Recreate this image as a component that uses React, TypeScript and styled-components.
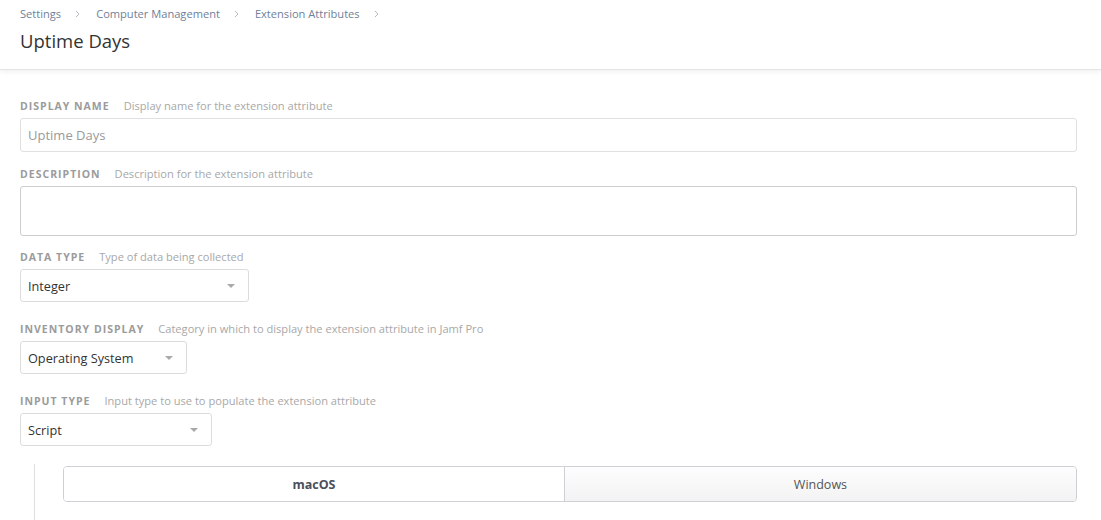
import React from 'react';
import styled, { createGlobalStyle } from 'styled-components';

const GlobalStyle = createGlobalStyle`
    * { box-sizing: border-box; }
    body {
        margin: 0;
        background: #fff;
        font-family: "Open Sans", "Liberation Sans", sans-serif;
        color: #333;
    }
`

const Header = styled.header`
    height: 70px;
    padding: 6px 20px 0;
    background: #fff;
    border-bottom: 1px solid #e4e4e4;
    box-shadow: 0 2px 5px rgba(0, 0, 0, 0.06);
`

const Breadcrumbs = styled.nav`
    display: flex;
    align-items: center;
    font-size: 11.1px;
    line-height: 16px;
    color: #6f7f9a;
`

const Chevron = styled.svg`
    width: 5px;
    height: 8px;
    margin: 0 16px 0 14px;
`

const Title = styled.h1`
    margin: 7px 0 0;
    font-size: 18.5px;
    font-weight: 400;
    color: #333;
    line-height: 24px;
`

const Content = styled.main`
    padding: 29px 24px 0 20px;
`

const Field = styled.div<{ $gap?: number }>`
    margin-bottom: ${p => p.$gap ?? 15}px;
`

const LabelRow = styled.div`
    display: flex;
    align-items: baseline;
    height: 13px;
    line-height: 13px;
    margin-bottom: 6px;
    label {
        font-size: 10.5px;
        font-weight: 700;
        letter-spacing: 1px;
        color: #9b9b9b;
        margin-right: 14px;
    }
    span {
        font-size: 11.1px;
        color: #a8a8a8;
    }
`

const TextInput = styled.div`
    height: 34px;
    border: 1px solid #e0e0e0;
    border-radius: 3px;
    padding: 0 7px;
    display: flex;
    align-items: center;
    font-size: 13px;
    color: #9a9a9a;
`

const TextArea = styled.div`
    height: 50px;
    border: 1px solid #cdcdcd;
    border-radius: 3px;
`

const Select = styled.div<{ $width: number }>`
    width: ${p => p.$width}px;
    height: 33px;
    border: 1px solid #dcdcdc;
    border-radius: 3px;
    padding: 0 13px 0 7px;
    display: flex;
    align-items: center;
    justify-content: space-between;
    font-size: 12.7px;
    color: #333;
    &::after {
        content: '';
        border-left: 4px solid transparent;
        border-right: 4px solid transparent;
        border-top: 4px solid #a9a9a9;
    }
`

const ScriptSection = styled.section`
    margin-left: 14px;
    padding: 2px 0 20px 28px;
    border-left: 1px solid #dedede;
`

const Tabs = styled.div`
    display: grid;
    grid-template-columns: 49.4% 1fr;
    height: 36px;
    border: 1px solid #cfcfd4;
    border-radius: 4px;
    overflow: hidden;
`

const Tab = styled.div<{ $active?: boolean }>`
    display: flex;
    align-items: center;
    justify-content: center;
    font-size: 12.5px;
    font-weight: ${p => p.$active ? 700 : 400};
    color: ${p => p.$active ? '#4a4f5c' : '#555'};
    background: ${p => p.$active ? '#fff' : 'linear-gradient(#fdfdfd, #f3f3f3)'};
    & + & {
        border-left: 1px solid #cfcfd4;
    }
`

const Sep = () => (
    <Chevron viewBox="0 0 5 8">
        <path d="M1 1l3 3-3 3" fill="none" stroke="#b3bac6" strokeWidth="1" />
    </Chevron>
)

function App() {
    return (
        <>
            <GlobalStyle />
            <Header>
                <Breadcrumbs>
                    Settings<Sep />
                    Computer Management<Sep />
                    Extension Attributes<Sep />
                </Breadcrumbs>
                <Title>Uptime Days</Title>
            </Header>

            <Content>
                <Field>
                    <LabelRow>
                        <label>DISPLAY NAME</label>
                        <span>Display name for the extension attribute</span>
                    </LabelRow>
                    <TextInput>Uptime Days</TextInput>
                </Field>

                <Field $gap={14}>
                    <LabelRow>
                        <label>DESCRIPTION</label>
                        <span>Description for the extension attribute</span>
                    </LabelRow>
                    <TextArea />
                </Field>

                <Field $gap={20}>
                    <LabelRow>
                        <label>DATA TYPE</label>
                        <span>Type of data being collected</span>
                    </LabelRow>
                    <Select $width={229}>Integer</Select>
                </Field>

                <Field $gap={20}>
                    <LabelRow>
                        <label>INVENTORY DISPLAY</label>
                        <span>Category in which to display the extension attribute in Jamf Pro</span>
                    </LabelRow>
                    <Select $width={167}>Operating System</Select>
                </Field>

                <Field $gap={18}>
                    <LabelRow>
                        <label>INPUT TYPE</label>
                        <span>Input type to use to populate the extension attribute</span>
                    </LabelRow>
                    <Select $width={192}>Script</Select>
                </Field>

                <ScriptSection>
                    <Tabs>
                        <Tab $active>macOS</Tab>
                        <Tab>Windows</Tab>
                    </Tabs>
                </ScriptSection>
            </Content>
        </>
    )
}

export default App;
